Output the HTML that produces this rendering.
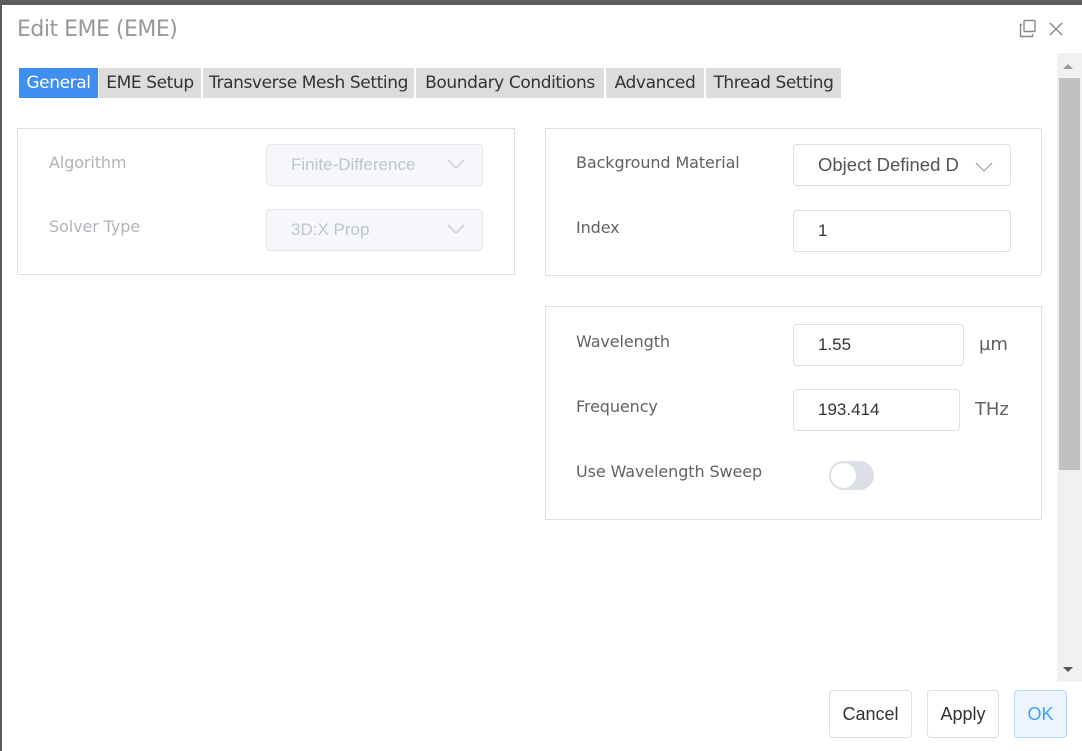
<html><head><style>
body{margin:0;width:1082px;height:751px;background:#5c5c5c;position:relative;overflow:hidden;font-family:"Liberation Sans",sans-serif}
.d{position:absolute;left:2px;top:5px;width:1080px;height:746px;background:#fff}
.a{position:absolute}
.t{position:absolute;top:68px;height:30px;line-height:31px;background:#dcdcdc;color:#333;font-size:17px;text-align:center;font-family:"DejaVu Sans","Liberation Sans",sans-serif;letter-spacing:-0.4px}
.p{position:absolute;border:1px solid #dcdfe6}
.l{position:absolute;font-size:16px;color:#606266;font-family:"DejaVu Sans","Liberation Sans",sans-serif;letter-spacing:-0.1px}
.in{position:absolute;border:1px solid #dcdfe6;border-radius:4px;font-size:17px;color:#333;box-sizing:border-box;padding-left:24px;line-height:40px;background:#fff}
.dis{background:#f5f7fa;border-color:#e4e7ed;color:#c0c4cc}
.b{position:absolute;top:690px;height:48px;border:1px solid #dcdfe6;border-radius:4px;box-sizing:border-box;font-size:18px;color:#333;text-align:center;line-height:46px}
</style></head><body>
<div class="d"></div>
<div class="a" style="left:17px;top:17px;font-size:22px;color:#999;font-family:'DejaVu Sans',sans-serif;letter-spacing:-0.5px">Edit EME (EME)</div>
<svg class="a" style="left:1018px;top:19px" width="20" height="20" viewBox="0 0 20 20" fill="none" stroke="#888" stroke-width="1.4"><rect x="6" y="1.5" width="11" height="11" rx="1"/><path d="M4 5.5H2.5v12h12V15"/></svg>
<svg class="a" style="left:1048px;top:21px" width="16" height="16" viewBox="0 0 16 16" stroke="#888" stroke-width="1.4"><path d="M2 2L14 14M14 2L2 14"/></svg>
<div class="t" style="left:19px;width:79px;background:#3e8ff0;color:#fff">General</div>
<div class="t" style="left:99px;width:102px">EME Setup</div>
<div class="t" style="left:203px;width:211px">Transverse Mesh Setting</div>
<div class="t" style="left:416px;width:188px">Boundary Conditions</div>
<div class="t" style="left:606px;width:98px">Advanced</div>
<div class="t" style="left:706px;width:135px">Thread Setting</div>
<div class="p" style="left:17px;top:128px;width:496px;height:145px"></div>
<div class="l" style="left:49px;top:153px;color:#b0b3b8">Algorithm</div>
<div class="in dis" style="left:266px;top:144px;width:217px;height:42px">Finite-Difference</div>
<div class="l" style="left:49px;top:217px;color:#b0b3b8">Solver Type</div>
<div class="in dis" style="left:266px;top:209px;width:217px;height:42px">3D:X Prop</div>
<div class="p" style="left:545px;top:128px;width:495px;height:146px"></div>
<div class="l" style="left:576px;top:153px">Background Material</div>
<div class="in" style="left:793px;top:144px;width:218px;height:42px;color:#555;padding-left:24px;overflow:hidden;white-space:nowrap;font-size:18.5px">Object Defined D</div>
<div class="a" style="left:958px;top:146px;width:30px;height:38px;background:#fff"></div>
<div class="l" style="left:576px;top:218px">Index</div>
<div class="in" style="left:793px;top:210px;width:218px;height:42px">1</div>
<div class="p" style="left:545px;top:306px;width:495px;height:212px"></div>
<div class="l" style="left:576px;top:332px">Wavelength</div>
<div class="in" style="left:793px;top:324px;width:171px;height:42px">1.55</div>
<div class="l" style="left:979px;top:334px;font-size:18px">µm</div>
<div class="l" style="left:576px;top:397px">Frequency</div>
<div class="in" style="left:793px;top:389px;width:167px;height:42px">193.414</div>
<div class="l" style="left:975px;top:399px;font-size:18px">THz</div>
<div class="l" style="left:576px;top:462px">Use Wavelength Sweep</div>
<div class="a" style="left:829px;top:461px;width:45px;height:29px;border-radius:15px;background:#dcdfe6"></div>
<div class="a" style="left:831px;top:463px;width:25px;height:25px;border-radius:50%;background:#fff"></div>
<svg class="a" style="left:0;top:0" width="1082" height="751"><path d="M448 160l8 8 8-8M448 225l8 8 8-8" stroke="#c8cbd0" stroke-width="1.3" fill="none"/><path d="M976 163l8 8 8-8" stroke="#aaa" stroke-width="1.3" fill="none"/></svg>
<div class="a" style="left:1057px;top:53px;width:25px;height:629px;background:#f1f1f1"></div>
<div class="a" style="left:1059px;top:78px;width:21px;height:392px;background:#c1c1c1"></div>
<svg class="a" style="left:1062px;top:62px" width="12" height="8"><path d="M1 7L6 2L11 7Z" fill="#999"/></svg>
<svg class="a" style="left:1062px;top:666px" width="12" height="8"><path d="M1 1L6 6L11 1Z" fill="#555"/></svg>
<div class="b" style="left:829px;width:83px">Cancel</div>
<div class="b" style="left:927px;width:72px">Apply</div>
<div class="b" style="left:1014px;width:53px;background:#ecf5ff;border-color:#b3d8ff;color:#409eff">OK</div>
</body></html>
